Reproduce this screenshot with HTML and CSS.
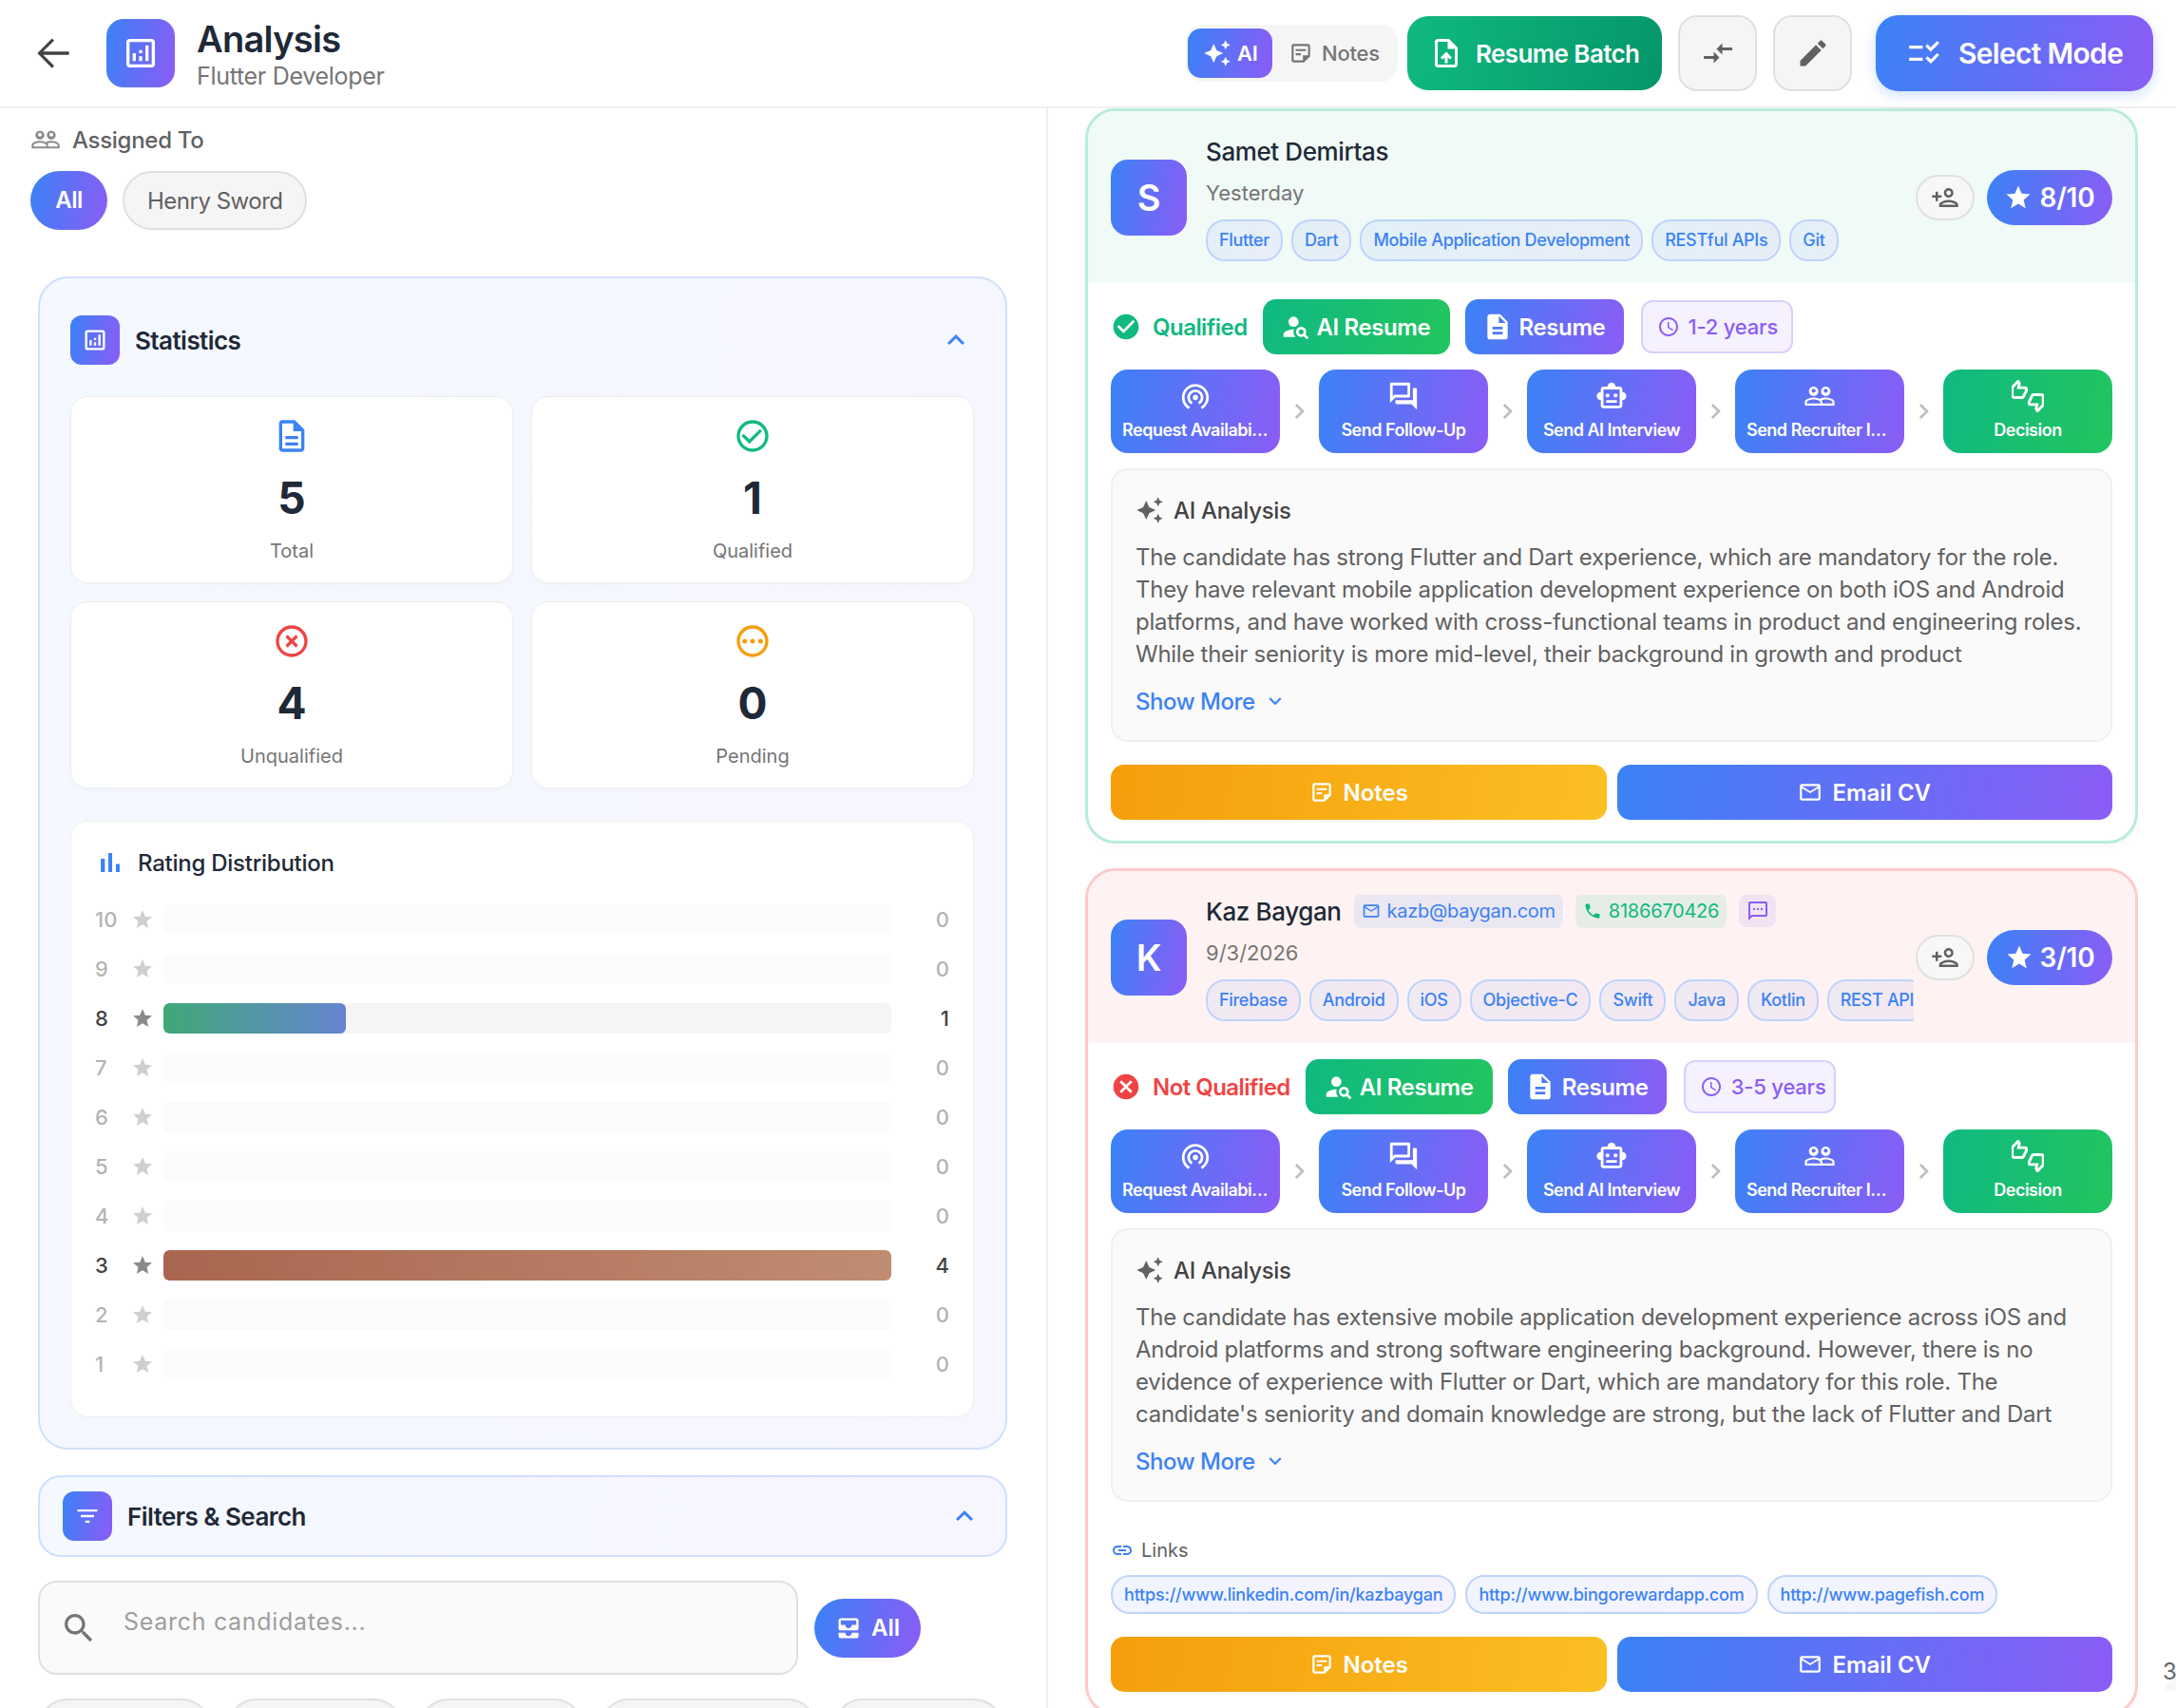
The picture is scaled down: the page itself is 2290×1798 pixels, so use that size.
FILE: index.html
```html
<!DOCTYPE html>
<html lang="en">
<head>
  <meta charset="UTF-8" />
  <title>Analysis - Flutter Developer</title>
  <link rel="stylesheet" href="styles.css">
</head>
<body>
  <!-- icon sprite -->
  <svg class="sprite" xmlns="http://www.w3.org/2000/svg">
    <symbol id="i-back" viewBox="0 0 24 24"><path d="M20 11.2H6.9l5.6-5.6L11.4 4.5 4 12l7.4 7.5 1.1-1.1-5.6-5.6H20z"/></symbol>
    <symbol id="i-analytics" viewBox="0 0 24 24"><path d="M19 3H5c-1.1 0-2 .9-2 2v14c0 1.1.9 2 2 2h14c1.1 0 2-.9 2-2V5c0-1.1-.9-2-2-2zm0 16H5V5h14v14zM7 12h2v5H7zM15 7h2v10h-2zM11 14h2v3h-2zM11 10h2v2h-2z"/></symbol>
    <symbol id="i-spark" viewBox="0 0 24 24"><path d="M19 9l1.25-2.75L23 5l-2.75-1.25L19 1l-1.25 2.75L15 5l2.75 1.25L19 9zm-7.5.5L9 4 6.5 9.5 1 12l5.5 2.5L9 20l2.5-5.5L17 12l-5.5-2.5zM19 15l-1.25 2.75L15 19l2.75 1.25L19 23l1.25-2.75L23 19l-2.75-1.25L19 15z"/></symbol>
    <symbol id="i-note" viewBox="0 0 24 24"><path d="M19 5v9h-5v5H5V5h14m0-2H5c-1.1 0-2 .9-2 2v14c0 1.1.9 2 2 2h10l6-6V5c0-1.1-.9-2-2-2zm-7 11H7v-2h5v2zm5-4H7V8h10v2z"/></symbol>
    <symbol id="i-upload" viewBox="0 0 24 24"><path d="M14 2H6c-1.1 0-1.99.9-1.99 2L4 20c0 1.1.89 2 1.99 2H18c1.1 0 2-.9 2-2V8l-6-6zm4 18H6V4h7v5h5v11zM8 15.01l1.41 1.41L11 14.84V19h2v-4.16l1.59 1.59L16 15.01 12.01 11z"/></symbol>
    <symbol id="i-compare" viewBox="0 0 24 24"><path d="M9.01 14H2v2h7.01v3L13 15l-3.99-4v3zm5.98-1v-3H22V8h-7.01V5L11 9l3.99 4z"/></symbol>
    <symbol id="i-edit" viewBox="0 0 24 24"><path d="M3 17.25V21h3.75L17.81 9.94l-3.75-3.75L3 17.25zM20.71 7.04c.39-.39.39-1.02 0-1.41l-2.34-2.34c-.39-.39-1.02-.39-1.41 0l-1.83 1.83 3.75 3.75 1.83-1.83z"/></symbol>
    <symbol id="i-checklist" viewBox="0 0 24 24"><path d="M11 7H2v2h9V7zm0 8H2v2h9v-2zm5.34-4L12.8 7.46l1.41-1.41 2.12 2.12 4.24-4.24L22 5.34 16.34 11zm0 8l-3.54-3.54 1.41-1.41 2.12 2.12 4.24-4.24L22 13.34 16.34 19z"/></symbol>
    <symbol id="i-star" viewBox="0 0 24 24"><path d="M12 17.27L18.18 21l-1.64-7.03L22 9.24l-7.19-.61L12 2 9.19 8.63 2 9.24l5.46 4.73L5.82 21z"/></symbol>
    <symbol id="i-person-add" viewBox="0 0 24 24"><path d="M11 8c0-2.21 1.79-4 4-4s4 1.79 4 4-1.79 4-4 4-4-1.79-4-4zm2 0c0 1.1.9 2 2 2s2-.9 2-2-.9-2-2-2-2 .9-2 2zM23 18v2H7v-2c0-2.66 5.33-4 8-4s8 1.34 8 4zm-2 0c-.2-.71-3.3-2-6-2-2.69 0-5.77 1.28-6 2h12zM4 15v-3H1v-2h3V7h2v3h3v2H6v3H4z"/></symbol>
    <symbol id="i-check" viewBox="0 0 24 24"><path d="M12 2C6.48 2 2 6.48 2 12s4.48 10 10 10 10-4.48 10-10S17.52 2 12 2zm-2 15l-5-5 1.41-1.41L10 14.17l7.59-7.59L19 8l-9 9z"/></symbol>
    <symbol id="i-cancel" viewBox="0 0 24 24"><path d="M12 2C6.47 2 2 6.47 2 12s4.47 10 10 10 10-4.47 10-10S17.53 2 12 2zm5 13.59L15.59 17 12 13.41 8.41 17 7 15.59 10.59 12 7 8.41 8.41 7 12 10.59 15.59 7 17 8.41 13.41 12 17 15.59z"/></symbol>
    <symbol id="i-person-search" viewBox="0 0 24 24"><circle cx="10" cy="8" r="4"/><path d="M10.35 14.01C7.62 13.91 2 15.27 2 18v2h9.54c-2.47-2.76-1.23-5.89-1.19-5.99z"/><path d="M19.43 18.02c.36-.59.57-1.28.57-2.02 0-2.21-1.79-4-4-4s-4 1.79-4 4 1.79 4 4 4c.74 0 1.43-.22 2.02-.57L20.59 22 22 20.59l-2.57-2.57zM16 18c-1.1 0-2-.9-2-2s.9-2 2-2 2 .9 2 2-.9 2-2 2z"/></symbol>
    <symbol id="i-doc" viewBox="0 0 24 24"><path d="M14 2H6c-1.1 0-1.99.9-1.99 2L4 20c0 1.1.89 2 1.99 2H18c1.1 0 2-.9 2-2V8l-6-6zm2 16H8v-2h8v2zm0-4H8v-2h8v2zm-3-5V3.5L18.5 9H13z"/></symbol>
    <symbol id="i-doc-line" viewBox="0 0 24 24"><path d="M8 16h8v2H8zm0-4h8v2H8zm6-10H6c-1.1 0-2 .9-2 2v16c0 1.1.89 2 1.99 2H18c1.1 0 2-.9 2-2V8l-6-6zm4 18H6V4h7v5h5v11z"/></symbol>
    <symbol id="i-clock" viewBox="0 0 24 24"><path d="M11.99 2C6.47 2 2 6.48 2 12s4.47 10 9.99 10C17.52 22 22 17.52 22 12S17.52 2 11.99 2zM12 20c-4.42 0-8-3.58-8-8s3.58-8 8-8 8 3.58 8 8-3.58 8-8 8zm.5-13H11v6l5.25 3.15.75-1.23-4.5-2.67z"/></symbol>
    <symbol id="i-tether" viewBox="0 0 24 24"><path d="M12 11c-1.1 0-2 .9-2 2s.9 2 2 2 2-.9 2-2-.9-2-2-2zm6 2c0-3.31-2.69-6-6-6s-6 2.69-6 6c0 2.22 1.21 4.15 3 5.19l1-1.74c-1.19-.7-2-1.97-2-3.45 0-2.21 1.79-4 4-4s4 1.79 4 4c0 1.48-.81 2.75-2 3.45l1 1.74c1.79-1.04 3-2.97 3-5.19zM12 3C6.48 3 2 7.48 2 13c0 3.7 2.01 6.92 4.99 8.65l1-1.73C5.61 18.53 4 15.96 4 13c0-4.42 3.58-8 8-8s8 3.58 8 8c0 2.96-1.61 5.53-4 6.92l1 1.73c2.99-1.73 5-4.95 5-8.65 0-5.52-4.48-10-10-10z"/></symbol>
    <symbol id="i-forum" viewBox="0 0 24 24"><path d="M15 4v7H5.17L4 12.17V4h11m1-2H3c-.55 0-1 .45-1 1v14l4-4h10c.55 0 1-.45 1-1V3c0-.55-.45-1-1-1zm5 4h-2v9H6v2c0 .55.45 1 1 1h11l4 4V7c0-.55-.45-1-1-1z"/></symbol>
    <symbol id="i-robot" viewBox="0 0 24 24"><path d="M20 9V7c0-1.1-.9-2-2-2h-3c0-1.66-1.34-3-3-3S9 3.34 9 5H6c-1.1 0-2 .9-2 2v2c-1.66 0-3 1.34-3 3s1.34 3 3 3v4c0 1.1.9 2 2 2h12c1.1 0 2-.9 2-2v-4c1.66 0 3-1.34 3-3s-1.34-3-3-3zm-2 10H6V7h12v12zm-9-6c-.83 0-1.5-.67-1.5-1.5S8.17 10 9 10s1.5.67 1.5 1.5S9.83 13 9 13zm7.5-1.5c0 .83-.67 1.5-1.5 1.5s-1.5-.67-1.5-1.5S14.17 10 15 10s1.5.67 1.5 1.5zM8 15h8v2H8v-2z"/></symbol>
    <symbol id="i-people" viewBox="0 0 24 24"><path d="M16.5 13c-1.2 0-3.07.34-4.5 1-1.43-.67-3.3-1-4.5-1C5.33 13 1 14.08 1 16.25V19h22v-2.75c0-2.17-4.33-3.25-6.5-3.25zm-4 4.5h-10v-1.25c0-.54 2.56-1.75 5-1.75s5 1.21 5 1.75v1.25zm9 0H14v-1.25c0-.46-.2-.86-.52-1.22.88-.3 1.96-.53 3.02-.53 2.44 0 5 1.21 5 1.75v1.25zM7.5 12c1.93 0 3.5-1.57 3.5-3.5S9.43 5 7.5 5 4 6.57 4 8.5 5.57 12 7.5 12zm0-5.5c.83 0 1.5.67 1.5 1.5s-.67 1.5-1.5 1.5S6 8.83 6 8 6.67 6.5 7.5 6.5zm9 5.5c1.93 0 3.5-1.57 3.5-3.5S18.43 5 16.5 5 13 6.57 13 8.5s1.57 3.5 3.5 3.5zm0-5.5c.83 0 1.5.67 1.5 1.5s-.67 1.5-1.5 1.5S15 8.83 15 8s.67-1.5 1.5-1.5z"/></symbol>
    <symbol id="i-thumbs" viewBox="0.5 0.5 23 23"><path fill="none" stroke="currentColor" stroke-width="2" d="M11 7c0-.55-.45-1-1-1H5.4l.6-3-.9-1.6L1.4 5.2C1.15 5.45 1 5.8 1 6.2V11.5c0 .83.67 1.5 1.5 1.5h5.2c.62 0 1.15-.38 1.38-.91L11 8zM21.5 11h-5.2c-.62 0-1.15.38-1.38.91L13 16v1c0 .55.45 1 1 1h4.6l-.6 3 .9 1.6 3.7-3.8c.25-.25.4-.6.4-1V12.5c0-.83-.67-1.5-1.5-1.5z"/></symbol>
    <symbol id="i-mail" viewBox="0 0 24 24"><path d="M20 4H4c-1.1 0-1.99.9-1.99 2L2 18c0 1.1.9 2 2 2h16c1.1 0 2-.9 2-2V6c0-1.1-.9-2-2-2zm0 14H4V8l8 5 8-5v10zm-8-7L4 6h16l-8 5z"/></symbol>
    <symbol id="i-phone" viewBox="0 0 24 24"><path d="M6.62 10.79c1.44 2.83 3.76 5.14 6.59 6.59l2.2-2.2c.27-.27.67-.36 1.02-.24 1.12.37 2.33.57 3.57.57.55 0 1 .45 1 1V20c0 .55-.45 1-1 1-9.39 0-17-7.61-17-17 0-.55.45-1 1-1h3.5c.55 0 1 .45 1 1 0 1.25.2 2.45.57 3.57.11.35.03.74-.25 1.02l-2.2 2.2z"/></symbol>
    <symbol id="i-sms" viewBox="0 0 24 24"><path d="M20 2H4c-1.1 0-1.99.9-1.99 2L2 22l4-4h14c1.1 0 2-.9 2-2V4c0-1.1-.9-2-2-2zm0 14H5.17L4 17.17V4h16v12zM7 9h2v2H7zm4 0h2v2h-2zm4 0h2v2h-2z"/></symbol>
    <symbol id="i-link" viewBox="0 0 24 24"><path d="M3.9 12c0-1.71 1.39-3.1 3.1-3.1h4V7H7c-2.76 0-5 2.24-5 5s2.24 5 5 5h4v-1.9H7c-1.71 0-3.1-1.39-3.1-3.1zM8 13h8v-2H8v2zm9-6h-4v1.9h4c1.71 0 3.1 1.39 3.1 3.1s-1.39 3.1-3.1 3.1h-4V17h4c2.76 0 5-2.24 5-5s-2.24-5-5-5z"/></symbol>
    <symbol id="i-search" viewBox="0 0 24 24"><path d="M15.5 14h-.79l-.28-.27C15.41 12.59 16 11.11 16 9.5 16 5.91 13.09 3 9.5 3S3 5.91 3 9.5 5.91 16 9.5 16c1.61 0 3.09-.59 4.23-1.57l.27.28v.79l5 4.99L20.49 19l-4.99-5zm-6 0C7.01 14 5 11.99 5 9.5S7.01 5 9.5 5 14 7.01 14 9.5 11.99 14 9.5 14z"/></symbol>
    <symbol id="i-filter" viewBox="0 0 24 24"><path d="M10 18h4v-2h-4v2zM3 6v2h18V6H3zm3 7h12v-2H6v2z"/></symbol>
    <symbol id="i-inbox" viewBox="0 0 24 24"><path d="M19 3H5c-1.1 0-2 .9-2 2v7c0 1.1.9 2 2 2h14c1.1 0 2-.9 2-2V5c0-1.1-.9-2-2-2zm0 6h-4c0 1.62-1.38 3-3 3s-3-1.38-3-3H5V5h14v4zm-4 7h6v3c0 1.1-.9 2-2 2H5c-1.1 0-2-.9-2-2v-3h6c0 1.66 1.34 3 3 3s3-1.34 3-3z"/></symbol>
    <symbol id="i-bars" viewBox="0 0 24 24"><path d="M5 9.2h3V19H5zM10.6 5h2.8v14h-2.8zm5.6 8H19v6h-2.8z"/></symbol>
    <symbol id="i-up" viewBox="0 0 24 24"><path d="M12 8l-6 6 1.41 1.41L12 10.83l4.59 4.58L18 14z"/></symbol>
    <symbol id="i-down" viewBox="0 0 24 24"><path d="M16.59 8.59L12 13.17 7.41 8.59 6 10l6 6 6-6z"/></symbol>
    <symbol id="i-right" viewBox="0 0 24 24"><path d="M10 6L8.59 7.41 13.17 12l-4.58 4.59L10 18l6-6z"/></symbol>
    <symbol id="i-check-line" viewBox="0 0 24 24"><path d="M16.59 7.58L10 14.17l-3.59-3.58L5 12l5 5 8-8zM12 2C6.48 2 2 6.48 2 12s4.48 10 10 10 10-4.48 10-10S17.52 2 12 2zm0 18c-4.42 0-8-3.58-8-8s3.58-8 8-8 8 3.58 8 8-3.58 8-8 8z"/></symbol>
    <symbol id="i-off-line" viewBox="0 0 24 24"><path d="M14.59 8L12 10.59 9.41 8 8 9.41 10.59 12 8 14.59 9.41 16 12 13.41 14.59 16 16 14.59 13.41 12 16 9.41 14.59 8zM12 2C6.47 2 2 6.47 2 12s4.47 10 10 10 10-4.47 10-10S17.53 2 12 2zm0 18c-4.41 0-8-3.59-8-8s3.59-8 8-8 8 3.59 8 8-3.59 8-8 8z"/></symbol>
    <symbol id="i-pending" viewBox="0 0 24 24"><path d="M12 2C6.48 2 2 6.48 2 12s4.48 10 10 10 10-4.48 10-10S17.52 2 12 2zm0 18c-4.42 0-8-3.58-8-8s3.58-8 8-8 8 3.58 8 8-3.58 8-8 8z"/><circle cx="7" cy="12" r="1.5"/><circle cx="12" cy="12" r="1.5"/><circle cx="17" cy="12" r="1.5"/></symbol>
  </svg>

  <header class="topbar">
    <svg class="back-icon"><use href="#i-back"/></svg>
    <div class="page-icon grad-blue"><svg><use href="#i-analytics"/></svg></div>
    <div class="page-title">
      <h1>Analysis</h1>
      <p>Flutter Developer</p>
    </div>
    <div class="top-actions">
      <div class="view-toggle">
        <span class="toggle-item active grad-blue"><svg><use href="#i-spark"/></svg>AI</span>
        <span class="toggle-item"><svg><use href="#i-note"/></svg>Notes</span>
      </div>
      <button class="btn-batch"><svg><use href="#i-upload"/></svg>Resume Batch</button>
      <button class="btn-square"><svg><use href="#i-compare"/></svg></button>
      <button class="btn-square"><svg><use href="#i-edit"/></svg></button>
      <button class="btn-select grad-blue"><svg><use href="#i-checklist"/></svg>Select Mode</button>
    </div>
  </header>

  <main class="main">
    <section class="left">
      <div class="assigned">
        <div class="assigned-label"><svg><use href="#i-people"/></svg>Assigned To</div>
        <div class="assigned-chips">
          <span class="chip chip-on">All</span>
          <span class="chip">Henry Sword</span>
        </div>
      </div>

      <div class="panel stats-panel">
        <div class="panel-head">
          <div class="panel-icon grad-blue"><svg><use href="#i-analytics"/></svg></div>
          <h2>Statistics</h2>
          <svg class="panel-chevron"><use href="#i-up"/></svg>
        </div>
        <div class="stat-grid">
          <div class="stat-card"><svg class="c-blue"><use href="#i-doc-line"/></svg><strong>5</strong><span>Total</span></div>
          <div class="stat-card"><svg class="c-green"><use href="#i-check-line"/></svg><strong>1</strong><span>Qualified</span></div>
          <div class="stat-card"><svg class="c-red"><use href="#i-off-line"/></svg><strong>4</strong><span>Unqualified</span></div>
          <div class="stat-card"><svg class="c-amber"><use href="#i-pending"/></svg><strong>0</strong><span>Pending</span></div>
        </div>
        <div class="rating-box">
          <h3><svg><use href="#i-bars"/></svg>Rating Distribution</h3>
          <div class="rating-row is-zero"><b>10</b><svg><use href="#i-star"/></svg><div class="track"></div><em>0</em></div>
          <div class="rating-row is-zero"><b>9</b><svg><use href="#i-star"/></svg><div class="track"></div><em>0</em></div>
          <div class="rating-row"><b>8</b><svg><use href="#i-star"/></svg><div class="track"><div class="fill fill-good" style="width:25%"></div></div><em>1</em></div>
          <div class="rating-row is-zero"><b>7</b><svg><use href="#i-star"/></svg><div class="track"></div><em>0</em></div>
          <div class="rating-row is-zero"><b>6</b><svg><use href="#i-star"/></svg><div class="track"></div><em>0</em></div>
          <div class="rating-row is-zero"><b>5</b><svg><use href="#i-star"/></svg><div class="track"></div><em>0</em></div>
          <div class="rating-row is-zero"><b>4</b><svg><use href="#i-star"/></svg><div class="track"></div><em>0</em></div>
          <div class="rating-row"><b>3</b><svg><use href="#i-star"/></svg><div class="track"><div class="fill fill-bad" style="width:100%"></div></div><em>4</em></div>
          <div class="rating-row is-zero"><b>2</b><svg><use href="#i-star"/></svg><div class="track"></div><em>0</em></div>
          <div class="rating-row is-zero"><b>1</b><svg><use href="#i-star"/></svg><div class="track"></div><em>0</em></div>
        </div>
      </div>

      <div class="panel filters-panel">
        <div class="panel-icon grad-blue"><svg><use href="#i-filter"/></svg></div>
        <h2>Filters &amp; Search</h2>
        <svg class="panel-chevron"><use href="#i-up"/></svg>
      </div>

      <div class="search-row">
        <div class="search-box">
          <svg><use href="#i-search"/></svg>
          <span>Search candidates...</span>
        </div>
        <button class="btn-all grad-blue"><svg><use href="#i-inbox"/></svg>All</button>
      </div>

      <div class="filter-chips">
        <span></span><span></span><span></span><span></span><span></span>
      </div>
    </section>

    <section class="right">
      <article class="cand cand-ok">
        <div class="cand-head">
          <div class="avatar grad-blue">S</div>
          <div class="cand-info">
            <div class="name-row"><span class="name">Samet Demirtas</span></div>
            <div class="cand-date">Yesterday</div>
            <div class="tags">
              <span>Flutter</span><span>Dart</span><span>Mobile Application Development</span><span>RESTful APIs</span><span>Git</span>
            </div>
          </div>
          <button class="btn-assign"><svg><use href="#i-person-add"/></svg></button>
          <div class="score grad-blue"><svg><use href="#i-star"/></svg>8/10</div>
        </div>
        <div class="cand-body">
          <div class="status-row">
            <svg class="status-icon c-green"><use href="#i-check"/></svg>
            <span class="status-text c-green">Qualified</span>
            <button class="btn-res grad-green"><svg><use href="#i-person-search"/></svg>AI Resume</button>
            <button class="btn-res btn-res-plain grad-blue"><svg><use href="#i-doc"/></svg>Resume</button>
            <span class="years"><svg><use href="#i-clock"/></svg>1-2 years</span>
          </div>
          <div class="steps">
            <div class="step grad-blue"><svg><use href="#i-tether"/></svg><span>Request Availability</span></div>
            <svg class="step-arrow"><use href="#i-right"/></svg>
            <div class="step grad-blue"><svg><use href="#i-forum"/></svg><span>Send Follow-Up</span></div>
            <svg class="step-arrow"><use href="#i-right"/></svg>
            <div class="step grad-blue"><svg><use href="#i-robot"/></svg><span>Send AI Interview</span></div>
            <svg class="step-arrow"><use href="#i-right"/></svg>
            <div class="step grad-blue"><svg><use href="#i-people"/></svg><span>Send Recruiter Interview</span></div>
            <svg class="step-arrow"><use href="#i-right"/></svg>
            <div class="step grad-green"><svg><use href="#i-thumbs"/></svg><span>Decision</span></div>
          </div>
          <div class="analysis">
            <h4><svg><use href="#i-spark"/></svg>AI Analysis</h4>
            <p>The candidate has strong Flutter and Dart experience, which are mandatory for the role. They have relevant mobile application development experience on both iOS and Android platforms, and have worked with cross-functional teams in product and engineering roles. While their seniority is more mid-level, their background in growth and product</p>
            <div class="show-more">Show More<svg><use href="#i-down"/></svg></div>
          </div>
          <div class="cand-foot">
            <button class="btn-notes"><svg><use href="#i-note"/></svg>Notes</button>
            <button class="btn-email grad-blue"><svg><use href="#i-mail"/></svg>Email CV</button>
          </div>
        </div>
      </article>

      <article class="cand cand-bad">
        <div class="cand-head">
          <div class="avatar grad-blue">K</div>
          <div class="cand-info">
            <div class="name-row">
              <span class="name">Kaz Baygan</span>
              <span class="contact contact-mail"><svg><use href="#i-mail"/></svg>kazb@baygan.com</span>
              <span class="contact contact-phone"><svg><use href="#i-phone"/></svg>8186670426</span>
              <span class="contact contact-sms"><svg><use href="#i-sms"/></svg></span>
            </div>
            <div class="cand-date">9/3/2026</div>
            <div class="tags">
              <span>Firebase</span><span>Android</span><span>iOS</span><span>Objective-C</span><span>Swift</span><span>Java</span><span>Kotlin</span><span>REST API</span>
            </div>
          </div>
          <button class="btn-assign"><svg><use href="#i-person-add"/></svg></button>
          <div class="score grad-blue"><svg><use href="#i-star"/></svg>3/10</div>
        </div>
        <div class="cand-body">
          <div class="status-row">
            <svg class="status-icon c-red"><use href="#i-cancel"/></svg>
            <span class="status-text c-red">Not Qualified</span>
            <button class="btn-res grad-green"><svg><use href="#i-person-search"/></svg>AI Resume</button>
            <button class="btn-res btn-res-plain grad-blue"><svg><use href="#i-doc"/></svg>Resume</button>
            <span class="years"><svg><use href="#i-clock"/></svg>3-5 years</span>
          </div>
          <div class="steps">
            <div class="step grad-blue"><svg><use href="#i-tether"/></svg><span>Request Availability</span></div>
            <svg class="step-arrow"><use href="#i-right"/></svg>
            <div class="step grad-blue"><svg><use href="#i-forum"/></svg><span>Send Follow-Up</span></div>
            <svg class="step-arrow"><use href="#i-right"/></svg>
            <div class="step grad-blue"><svg><use href="#i-robot"/></svg><span>Send AI Interview</span></div>
            <svg class="step-arrow"><use href="#i-right"/></svg>
            <div class="step grad-blue"><svg><use href="#i-people"/></svg><span>Send Recruiter Interview</span></div>
            <svg class="step-arrow"><use href="#i-right"/></svg>
            <div class="step grad-green"><svg><use href="#i-thumbs"/></svg><span>Decision</span></div>
          </div>
          <div class="analysis">
            <h4><svg><use href="#i-spark"/></svg>AI Analysis</h4>
            <p>The candidate has extensive mobile application development experience across iOS and Android platforms and strong software engineering background. However, there is no evidence of experience with Flutter or Dart, which are mandatory for this role. The candidate's seniority and domain knowledge are strong, but the lack of Flutter and Dart</p>
            <div class="show-more">Show More<svg><use href="#i-down"/></svg></div>
          </div>
          <div class="links">
            <div class="links-label"><svg><use href="#i-link"/></svg>Links</div>
            <div class="links-row">
              <span>https://www.linkedin.com/in/kazbaygan</span><span>http://www.bingorewardapp.com</span><span>http://www.pagefish.com</span>
            </div>
          </div>
          <div class="cand-foot">
            <button class="btn-notes"><svg><use href="#i-note"/></svg>Notes</button>
            <button class="btn-email grad-blue"><svg><use href="#i-mail"/></svg>Email CV</button>
          </div>
        </div>
      </article>
    </section>
  </main>

  <div class="corner-mark">3</div>
</body>
</html>
```

FILE: styles.css
```css
* {
  box-sizing: border-box;
}
html, body {
  margin: 0;
  height: 1798px;
  overflow: hidden;
}
body {
  font-family: Inter, "Noto Sans", sans-serif;
  background: #fff;
  color: #1f2937;
  position: relative;
}
h1, h2, h3, h4, p {
  margin: 0;
}
button {
  font-family: inherit;
  border: none;
  padding: 0;
  color: #fff;
}
svg {
  fill: currentColor;
  flex: none;
}
.sprite {
  display: none;
}
.grad-blue {
  background: linear-gradient(100deg, #3b82f6, #8b5cf6);
  color: #fff;
}
.grad-green {
  background: linear-gradient(100deg, #10b981, #22c55e);
  color: #fff;
}
.c-blue { color: #3b82f6; }
.c-green { color: #10b981; }
.c-red { color: #ef4444; }
.c-amber { color: #f59e0b; }

/* top bar */
.topbar {
  height: 114px;
  border-bottom: 2px solid #f0f0f0;
  display: flex;
  align-items: center;
  padding: 0 24px 0 31px;
}
.back-icon {
  width: 50px;
  height: 50px;
  color: #424242;
}
.page-icon {
  width: 72px;
  height: 72px;
  border-radius: 18px;
  margin-left: 31px;
  display: flex;
  align-items: center;
  justify-content: center;
}
.page-icon svg {
  width: 40px;
  height: 40px;
}
.page-title {
  margin-left: 23px;
  padding-top: 2px;
}
.page-title h1 {
  font-size: 38px;
  line-height: 46px;
  font-weight: 600;
  letter-spacing: -0.7px;
  color: #1f2937;
}
.page-title p {
  font-size: 25px;
  line-height: 33px;
  letter-spacing: -0.3px;
  color: #757575;
}
.top-actions {
  margin-left: auto;
  display: flex;
  align-items: center;
}
.view-toggle {
  display: flex;
  align-items: center;
  width: 223px;
  height: 60px;
  padding: 0 2px;
  background: #f5f5f5;
  border-radius: 18px;
  margin-right: 10px;
}
.toggle-item {
  display: flex;
  align-items: center;
  gap: 9px;
  height: 52px;
  padding: 0 0 0 17px;
  font-size: 22px;
  font-weight: 500;
  letter-spacing: -0.2px;
  color: #757575;
  border-radius: 14px;
}
.toggle-item svg {
  width: 26px;
  height: 26px;
}
.toggle-item.active {
  flex: none;
  width: 89px;
  padding: 0 0 0 16px;
  gap: 6px;
  font-weight: 600;
  color: #fff;
}
.toggle-item.active svg {
  width: 30px;
  height: 30px;
}
.btn-batch {
  display: flex;
  align-items: center;
  gap: 13px;
  width: 268px;
  height: 78px;
  padding-left: 23px;
  border-radius: 22px;
  background: linear-gradient(100deg, #10b981, #059669);
  font-size: 26px;
  font-weight: 600;
  letter-spacing: -0.6px;
  margin-right: 17px;
}
.btn-batch svg {
  width: 36px;
  height: 36px;
}
.btn-square {
  width: 83px;
  height: 80px;
  border-radius: 20px;
  background: #f5f5f5;
  border: 2px solid #e0e0e0;
  color: #616161;
  display: flex;
  align-items: center;
  justify-content: center;
  margin-right: 17px;
}
.btn-square + .btn-select {
  margin-left: 8px;
}
.btn-square svg {
  width: 36px;
  height: 36px;
}
.btn-select {
  display: flex;
  align-items: center;
  gap: 17px;
  width: 292px;
  height: 80px;
  padding-left: 32px;
  border-radius: 24px;
  font-size: 30px;
  font-weight: 600;
  letter-spacing: -0.7px;
  box-shadow: 0 4px 14px rgba(59, 130, 246, 0.25);
}
.btn-select svg {
  width: 38px;
  height: 38px;
}

/* page columns */
.main {
  display: grid;
  grid-template-columns: 1103px 1fr;
  height: 1684px;
  overflow: hidden;
}
.left {
  border-right: 2px solid #eee;
  padding-left: 40px;
  overflow: hidden;
}
.assigned {
  margin-left: -8px;
  padding-top: 19px;
}
.assigned-label {
  display: flex;
  align-items: center;
  gap: 12px;
  height: 28px;
  font-size: 24px;
  font-weight: 500;
  letter-spacing: -0.3px;
  color: #616161;
}
.assigned-label svg {
  width: 32px;
  height: 32px;
  color: #8a8a8a;
}
.assigned-chips {
  display: flex;
  gap: 16px;
  margin-top: 19px;
}
.chip {
  height: 62px;
  line-height: 60px;
  padding: 0 24px;
  border-radius: 31px;
  border: 2px solid #e0e0e0;
  background: #f5f5f5;
  color: #616161;
  font-size: 24px;
  letter-spacing: -0.5px;
}
.chip-on {
  border: none;
  line-height: 62px;
  width: 81px;
  padding: 0;
  text-align: center;
  background: linear-gradient(100deg, #3b82f6, #8b5cf6);
  color: #fff;
  font-weight: 600;
}
.panel {
  width: 1020px;
  background: linear-gradient(100deg, #f4f8ff, #f7f6ff);
  border: 2px solid #cfe0fd;
}
.stats-panel {
  margin-top: 49px;
  height: 1235px;
  border-radius: 32px;
  padding: 39px 33px 0 32px;
}
.panel-head {
  display: flex;
  align-items: center;
  gap: 16px;
}
.panel-icon {
  width: 52px;
  height: 52px;
  border-radius: 12px;
  display: flex;
  align-items: center;
  justify-content: center;
}
.panel-icon svg {
  width: 28px;
  height: 28px;
}
.panel h2 {
  font-size: 26px;
  font-weight: 600;
  letter-spacing: -0.55px;
  color: #1f2937;
}
.panel-chevron {
  margin-left: auto;
  width: 36px;
  height: 36px;
  color: #3b82f6;
  margin-right: 1px;
}
.stat-grid {
  display: grid;
  grid-template-columns: 1fr 1fr;
  gap: 19px;
  margin-top: 33px;
}
.stat-card {
  height: 197px;
  background: #fff;
  border: 1px solid #eeeeee;
  border-radius: 18px;
  box-shadow: 0 2px 5px rgba(0, 0, 0, 0.02);
  display: flex;
  flex-direction: column;
  align-items: center;
  padding-top: 21px;
}
.stat-card svg {
  width: 40px;
  height: 40px;
}
.stat-card strong {
  font-size: 46px;
  line-height: 60px;
  font-weight: 700;
  color: #1f2937;
  margin-top: 15px;
}
.stat-card span {
  font-size: 20px;
  line-height: 28px;
  color: #757575;
  margin-top: 12px;
}
.rating-box {
  margin-top: 34px;
  height: 628px;
  background: #fff;
  border: 1px solid #eeeeee;
  border-radius: 18px;
  padding: 23px 24px 0 25px;
}
.rating-box h3 {
  display: flex;
  align-items: center;
  gap: 12px;
  height: 40px;
  margin-bottom: 14px;
  font-size: 24px;
  font-weight: 500;
  letter-spacing: -0.25px;
  color: #1f2937;
}
.rating-box h3 svg {
  width: 34px;
  height: 34px;
  color: #3b82f6;
  margin-left: -1px;
}
.rating-row {
  display: flex;
  align-items: center;
  height: 52px;
}
.rating-row b {
  width: 38px;
  font-size: 22px;
  font-weight: 500;
  color: #424242;
}
.rating-row svg {
  width: 24px;
  height: 24px;
  color: #8a8a8a;
}
.track {
  width: 766px;
  height: 32px;
  margin-left: 10px;
  background: #f5f5f5;
  border-radius: 6px;
  overflow: hidden;
}
.fill {
  height: 100%;
  border-radius: 6px;
}
.fill-good {
  background: linear-gradient(90deg, #3fa877, #6584cf);
}
.fill-bad {
  background: linear-gradient(90deg, #a9654f, #c08d72);
}
.rating-row em {
  width: 61px;
  text-align: right;
  font-style: normal;
  font-size: 22px;
  font-weight: 500;
  color: #424242;
}
.is-zero b,
.is-zero svg,
.is-zero em {
  opacity: 0.4;
}
.is-zero .track {
  opacity: 0.4;
}
.filters-panel {
  margin-top: 27px;
  height: 86px;
  border-radius: 24px;
  display: flex;
  align-items: center;
  gap: 16px;
  padding: 0 25px 0 24px;
}
.filters-panel .panel-chevron {
  margin-right: 0;
}
.search-row {
  display: flex;
  align-items: center;
  gap: 17px;
  margin-top: 25px;
}
.search-box {
  width: 800px;
  height: 99px;
  background: #fafafa;
  border: 2px solid #e0e0e0;
  border-radius: 20px;
  display: flex;
  align-items: center;
  gap: 27px;
  padding: 0 0 14px 21px;
  color: #9e9e9e;
  font-size: 25px;
  letter-spacing: 0.7px;
}
.search-box svg {
  width: 40px;
  height: 40px;
  color: #757575;
  margin-top: 14px;
}
.btn-all {
  display: flex;
  align-items: center;
  justify-content: center;
  gap: 10px;
  width: 112px;
  height: 62px;
  border-radius: 31px;
  font-size: 24px;
  font-weight: 600;
}
.btn-all svg {
  width: 28px;
  height: 28px;
}
.filter-chips {
  display: grid;
  grid-template-columns: 182px 185px 173px 229px 179px;
  gap: 17px;
  margin-top: 25px;
}
.filter-chips span {
  height: 62px;
  background: #f5f5f5;
  border: 2px solid #e0e0e0;
  border-radius: 31px;
}

/* candidate cards */
.right {
  padding-left: 39px;
  width: 1147px;
  overflow: hidden;
}
.cand {
  border: 3px solid #b8ecd9;
  border-radius: 32px;
  overflow: hidden;
  background: #fff;
  margin-bottom: 26px;
  box-shadow: 0 3px 10px rgba(0, 0, 0, 0.03);
}
.cand-bad {
  border-color: #fecaca;
}
.cand-head {
  display: flex;
  align-items: center;
  padding: 25px 24px 23px;
  background: #f0faf7;
}
.cand-bad .cand-head {
  background: #fef3f2;
}
.avatar {
  width: 80px;
  height: 80px;
  border-radius: 18px;
  display: flex;
  align-items: center;
  justify-content: center;
  font-size: 38px;
  font-weight: 600;
  flex: none;
  margin-bottom: 2px;
}
.cand-info {
  flex: 1;
  min-width: 0;
  margin-left: 20px;
  overflow: hidden;
}
.name-row {
  display: flex;
  align-items: center;
  height: 36px;
  gap: 13px;
  margin-top: -1px;
}
.name {
  font-size: 26px;
  font-weight: 500;
  letter-spacing: -0.4px;
  color: #1f2937;
}
.contact {
  display: flex;
  align-items: center;
  gap: 7px;
  height: 36px;
  padding: 0 8px;
  border-radius: 8px;
  font-size: 20px;
  letter-spacing: -0.25px;
}
.contact svg {
  width: 20px;
  height: 20px;
}
.contact-mail {
  background: rgba(59, 130, 246, 0.1);
  color: #3b82f6;
}
.contact-phone {
  background: rgba(16, 185, 129, 0.1);
  color: #10b981;
}
.contact-sms {
  background: rgba(139, 92, 246, 0.1);
  color: #8b5cf6;
  width: 39px;
  height: 34px;
  justify-content: center;
  padding: 0;
}
.contact-sms svg {
  width: 24px;
  height: 24px;
}
.cand-date {
  margin-top: 11px;
  height: 30px;
  line-height: 30px;
  font-size: 22px;
  color: #757575;
}
.tags {
  display: flex;
  gap: 9px;
  margin-top: 13px;
  overflow: hidden;
}
.tags span {
  flex: none;
  height: 44px;
  line-height: 40px;
  padding: 0 12px;
  border: 2px solid #bfd4fb;
  border-radius: 20px;
  background: linear-gradient(100deg, rgba(59, 130, 246, 0.08), rgba(139, 92, 246, 0.08));
  color: #3b82f6;
  font-size: 18px;
  font-weight: 500;
  letter-spacing: -0.3px;
}
.btn-assign {
  flex: none;
  width: 62px;
  height: 48px;
  border-radius: 24px;
  margin: 0 13px 2px 2px;
  background: #f7f7f7;
  border: 2px solid #e0e0e0;
  color: #616161;
  display: flex;
  align-items: center;
  justify-content: center;
}
.btn-assign svg {
  width: 30px;
  height: 30px;
}
.score {
  flex: none;
  width: 132px;
  height: 58px;
  border-radius: 29px;
  margin-bottom: 2px;
  display: flex;
  align-items: center;
  justify-content: center;
  gap: 7px;
  font-size: 28px;
  font-weight: 600;
  letter-spacing: -0.2px;
}
.score svg {
  width: 30px;
  height: 30px;
}
.cand-body {
  padding: 17px 24px 22px;
}
.status-row {
  display: flex;
  align-items: center;
  height: 58px;
}
.status-icon {
  width: 32px;
  height: 32px;
}
.status-text {
  margin-left: 12px;
  margin-right: 16px;
  font-size: 24px;
  font-weight: 600;
  letter-spacing: -0.55px;
}
.btn-res {
  display: flex;
  align-items: center;
  gap: 6px;
  height: 58px;
  width: 197px;
  padding-left: 19px;
  border-radius: 14px;
  font-size: 24px;
  font-weight: 600;
  letter-spacing: -0.4px;
  margin-right: 16px;
}
.btn-res svg {
  width: 32px;
  height: 32px;
}
.btn-res-plain {
  width: 167px;
  padding-left: 18px;
  gap: 7px;
  margin-right: 18px;
}
.years {
  display: flex;
  align-items: center;
  gap: 9px;
  height: 56px;
  width: 160px;
  padding-left: 15px;
  border: 2px solid #dccffb;
  border-radius: 12px;
  background: #f5f1fe;
  color: #8b5cf6;
  font-size: 22px;
  font-weight: 500;
  letter-spacing: -0.2px;
}
.years svg {
  width: 24px;
  height: 24px;
}
.steps {
  display: flex;
  align-items: center;
  margin-top: 16px;
}
.step {
  flex: 1;
  min-width: 0;
  height: 88px;
  border-radius: 18px;
  display: flex;
  flex-direction: column;
  align-items: center;
  padding: 11px 12px 0;
  gap: 7px;
}
.step svg {
  width: 34px;
  height: 34px;
}
.step span {
  display: block;
  width: 100%;
  font-size: 18px;
  line-height: 24px;
  font-weight: 600;
  letter-spacing: -0.5px;
  text-align: center;
  white-space: nowrap;
  overflow: hidden;
  text-overflow: ellipsis;
}
.step-arrow {
  width: 41px;
  height: 32px;
  color: #bdbdbd;
}
.analysis {
  margin-top: 16px;
  height: 288px;
  background: #fafafa;
  border: 2px solid #f0f0f0;
  border-radius: 18px;
  padding: 22px 24px;
}
.analysis h4 {
  display: flex;
  align-items: center;
  gap: 10px;
  height: 40px;
  margin-bottom: 13px;
  font-size: 24px;
  font-weight: 500;
  letter-spacing: -0.3px;
  color: #424242;
}
.analysis h4 svg {
  width: 30px;
  height: 30px;
  color: #616161;
}
.analysis p {
  font-size: 24px;
  line-height: 34px;
  letter-spacing: -0.27px;
  color: #616161;
  height: 136px;
  overflow: hidden;
}
.show-more {
  display: flex;
  align-items: center;
  gap: 8px;
  height: 36px;
  margin-top: 14px;
  font-size: 24px;
  font-weight: 500;
  letter-spacing: -0.45px;
  color: #3b82f6;
}
.show-more svg {
  width: 26px;
  height: 26px;
}
.links {
  margin-top: 37px;
}
.links-label {
  display: flex;
  align-items: center;
  gap: 8px;
  height: 28px;
  font-size: 20px;
  color: #616161;
}
.links-label svg {
  width: 24px;
  height: 24px;
  color: #3b82f6;
}
.links-row {
  display: flex;
  gap: 10px;
  margin-top: 12px;
}
.links-row span {
  height: 41px;
  line-height: 37px;
  padding: 0 12px;
  border: 2px solid #bfd4fb;
  border-radius: 20px;
  background: linear-gradient(100deg, rgba(59, 130, 246, 0.08), rgba(139, 92, 246, 0.08));
  color: #3b82f6;
  font-size: 18px;
  font-weight: 500;
  letter-spacing: -0.2px;
}
.cand-foot {
  display: grid;
  grid-template-columns: 1fr 1fr;
  gap: 11px;
  margin-top: 24px;
}
.cand-foot button {
  display: flex;
  align-items: center;
  justify-content: center;
  gap: 10px;
  height: 58px;
  border-radius: 14px;
  font-size: 24px;
  font-weight: 600;
}
.cand-foot svg {
  width: 26px;
  height: 26px;
}
.btn-notes {
  background: linear-gradient(100deg, #f59e0b, #fbbf24);
}
.btn-email {
  background: linear-gradient(100deg, #3b82f6, #8b5cf6);
}

/* faint glyph sitting in the window corner */
.corner-mark {
  position: absolute;
  right: -16px;
  bottom: 18px;
  width: 30px;
  height: 46px;
  padding-top: 14px;
  font-size: 24px;
  line-height: 24px;
  color: #666;
  background: linear-gradient(to bottom right, transparent 50%, #f7f7f7 50%);
}
```
